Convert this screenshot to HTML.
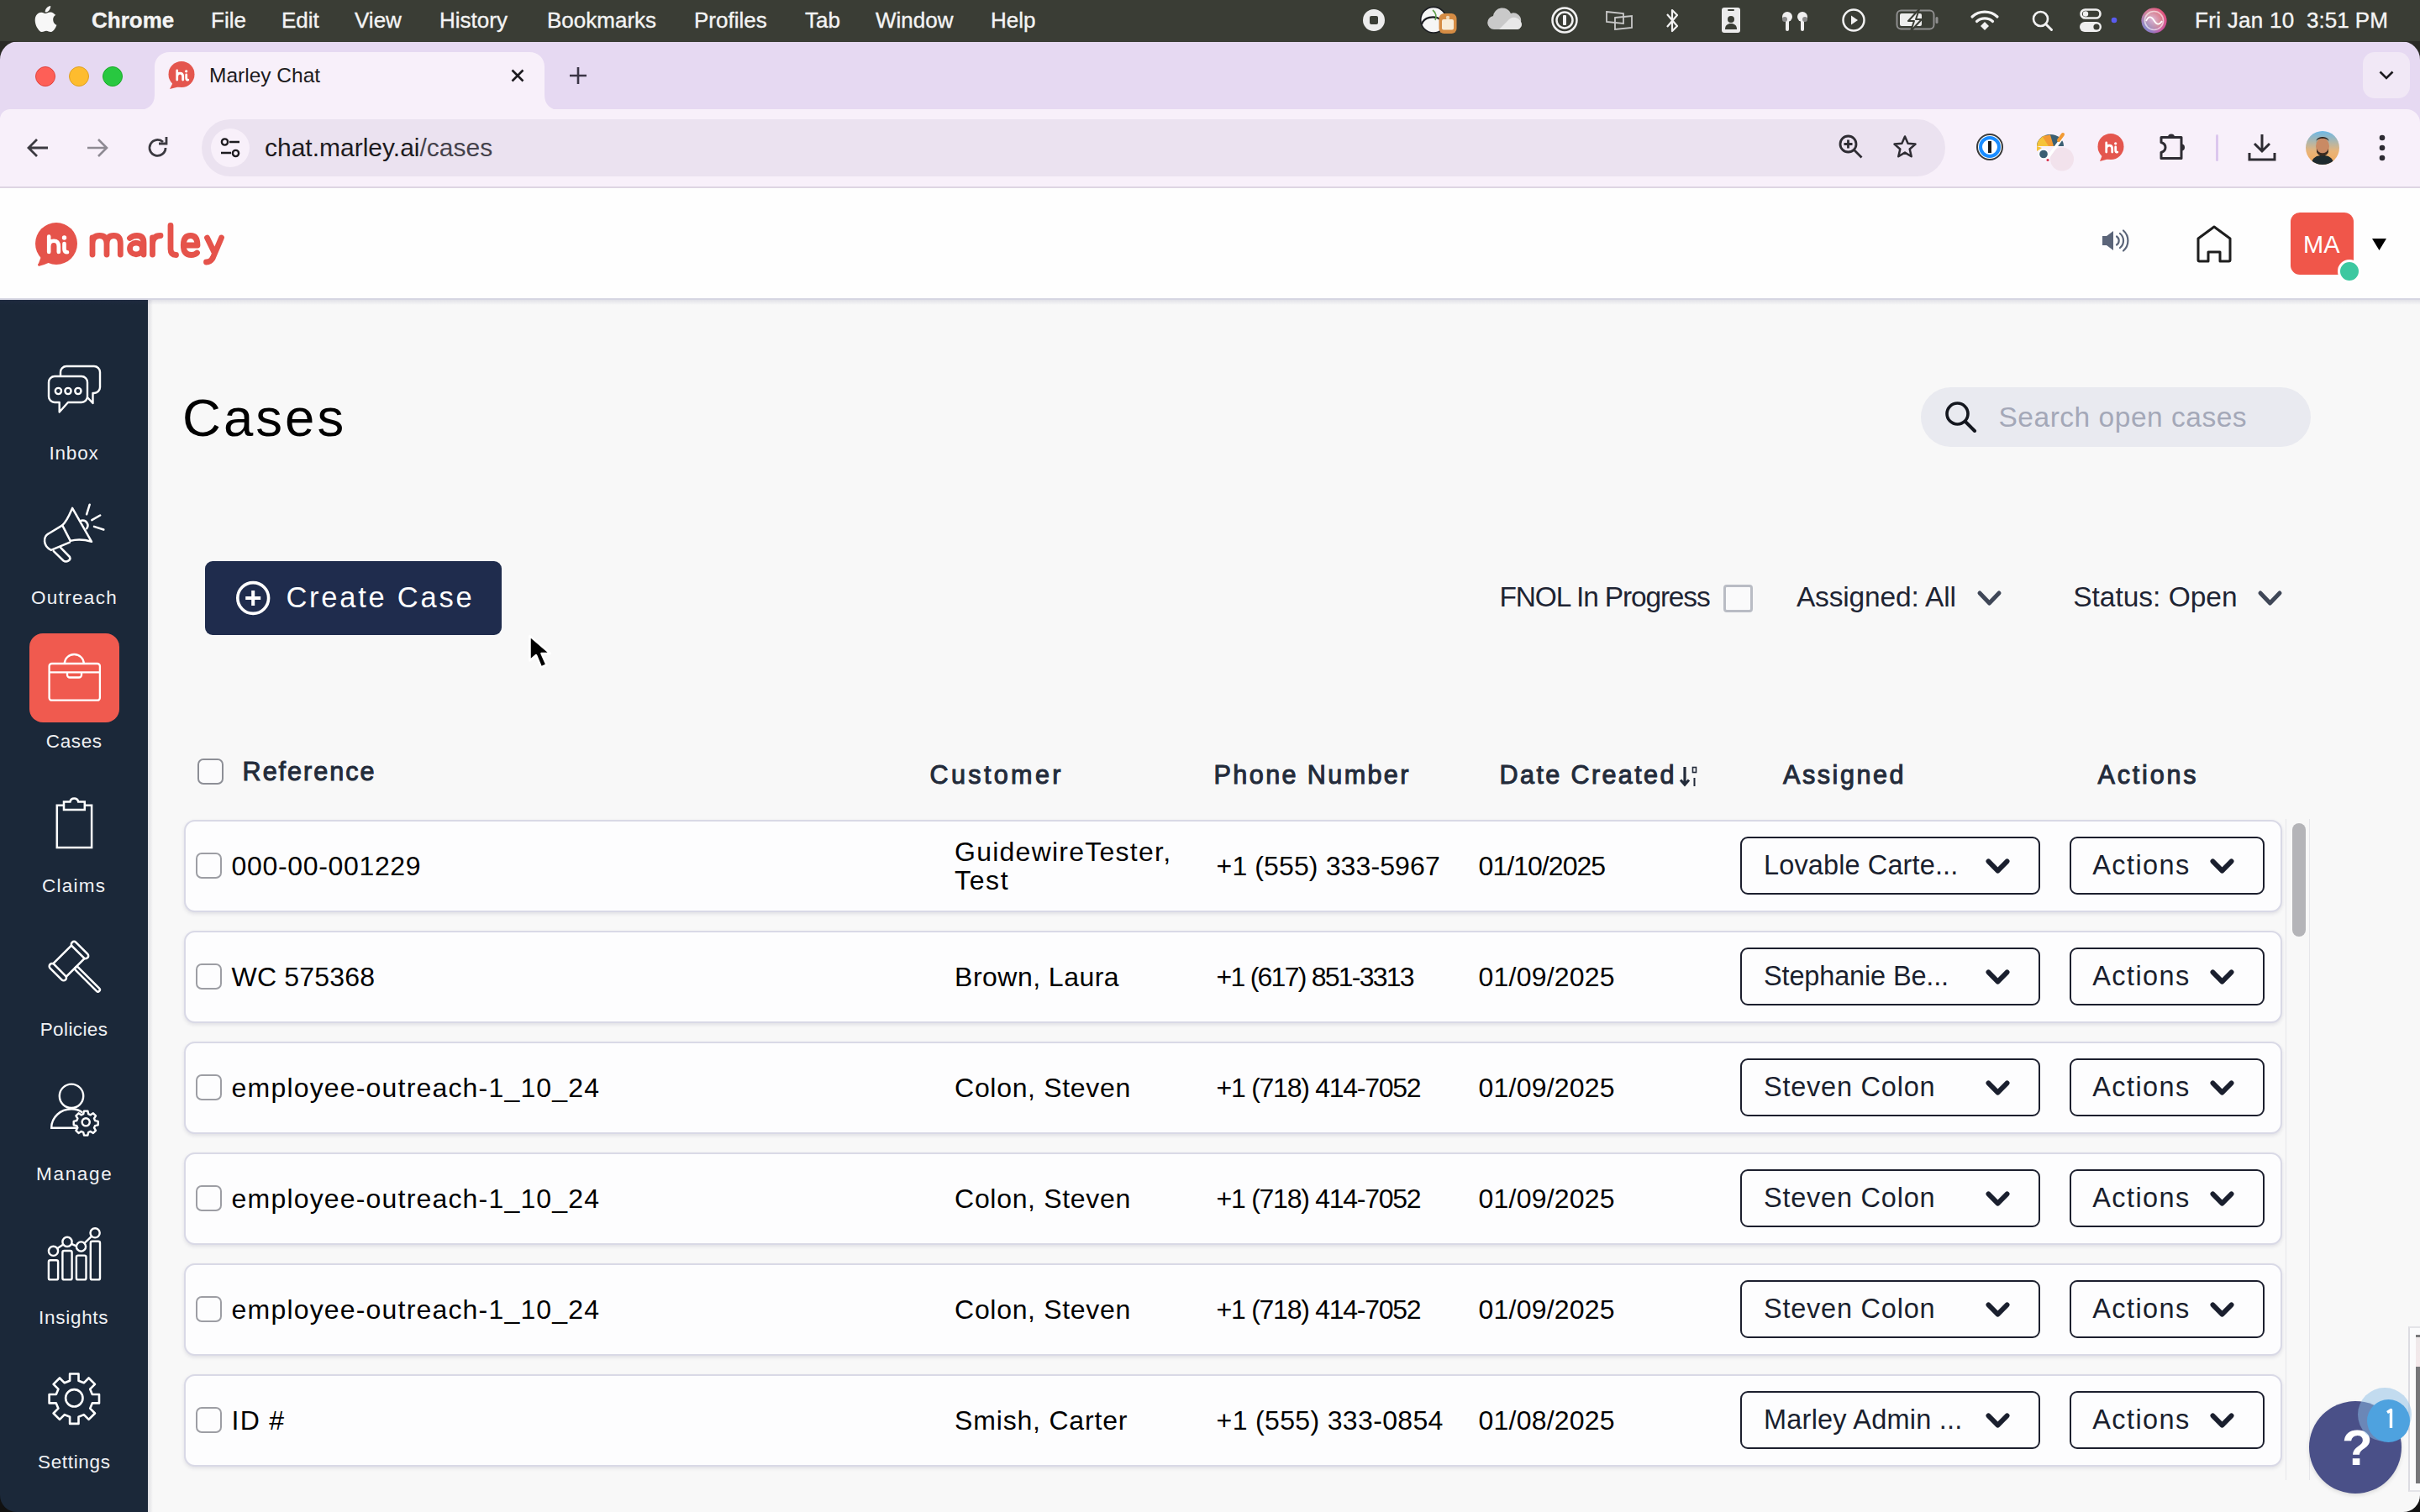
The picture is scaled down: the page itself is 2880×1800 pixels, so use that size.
<!DOCTYPE html>
<html><head><meta charset="utf-8">
<style>
*{box-sizing:border-box;margin:0;padding:0}
html,body{width:2880px;height:1800px;overflow:hidden;background:#f8f8f8;font-family:"Liberation Sans",sans-serif;position:relative}
.a{position:absolute}
svg{position:absolute;overflow:visible}
.t{position:absolute;white-space:nowrap;line-height:1}
#menubar{left:0;top:0;width:2880px;height:50px;background:#3a3d35;color:#f4f4f4;font-size:26px}
#menubar .t{top:11px;-webkit-text-stroke:0.35px #f4f4f4}
#tabstrip{left:0;top:50px;width:2880px;height:80px;background:#e6d9f2}
#toolbar{left:0;top:130px;width:2880px;height:94px;background:#f8f0fa;border-bottom:2px solid #ded5e3}
#omni{left:240px;top:142px;width:2075px;height:68px;background:#ebe2f0;border-radius:34px}
#apphdr{left:0;top:224px;width:2880px;height:133px;background:#fefefe;border-bottom:2px solid #d6d6e2}
#sidebar{left:0;top:357px;width:176px;height:1443px;background:#1b2839}
.nav2{width:176px;text-align:center;color:#f0f1f4;font-size:24.5px}
.card{left:219px;width:2497px;height:110px;border-radius:13px;background:#fdfdfe;border:2px solid #d9d9e6;box-shadow:0 2px 4px rgba(60,60,100,.13)}
.cb{width:31px;height:31px;border-radius:7px;border:2px solid #9d9ea4}
.dd{height:69px;border:2px solid #1c1f2e;border-radius:9px}
</style></head>
<body>
<!-- ===== macOS menu bar ===== -->
<div id="menubar" class="a">
  <svg style="left:42px;top:7px" width="26" height="31" viewBox="0 0 26 31"><path fill="#f7f7f7" d="M18.2 0c.2 2-.6 3.9-1.7 5.2-1.2 1.4-3 2.4-4.8 2.3-.2-1.9.7-3.9 1.8-5.1C14.7 1 16.6.1 18.2 0zM24.6 10.5c-.2.1-3.5 2-3.4 5.9 0 4.7 4.1 6.3 4.2 6.3 0 .1-.7 2.3-2.2 4.5-1.3 1.9-2.7 3.8-4.9 3.8-2.1 0-2.8-1.3-5.2-1.3-2.4 0-3.2 1.3-5.2 1.3-2.1.1-3.7-2.1-5-4C.3 23.2-1.7 16.2 1 11.5c1.3-2.3 3.7-3.8 6.3-3.8 2 0 3.9 1.4 5.1 1.4 1.2 0 3.3-1.7 5.6-1.5.9 0 3.7.4 5.5 3z"/></svg>
  <span class="t" style="left:109px;font-weight:bold">Chrome</span>
  <span class="t" style="left:251px">File</span>
  <span class="t" style="left:335px">Edit</span>
  <span class="t" style="left:422px">View</span>
  <span class="t" style="left:523px">History</span>
  <span class="t" style="left:651px">Bookmarks</span>
  <span class="t" style="left:826px">Profiles</span>
  <span class="t" style="left:958px">Tab</span>
  <span class="t" style="left:1042px">Window</span>
  <span class="t" style="left:1179px">Help</span>
  <!-- status icons -->
  <svg style="left:1622px;top:11px" width="26" height="26" viewBox="0 0 26 26"><circle cx="13" cy="13" r="13" fill="#ececec"/><rect x="8" y="8" width="10" height="10" rx="2" fill="#3a3d35"/></svg>
  <svg style="left:1690px;top:8px" width="46" height="34" viewBox="0 0 46 34"><circle cx="16" cy="15.7" r="15.3" fill="#f6f6f6" stroke="#1b1d22" stroke-width="1.6"/><path d="M2 21C4 13 16 9 26 16" fill="none" stroke="#1b1d22" stroke-width="2.2"/><path d="M15 4c4 3 5 8 3 12" fill="none" stroke="#5fa04a" stroke-width="1.6"/><rect x="22.5" y="8" width="21" height="24" rx="6" fill="#d58c44"/><rect x="26" y="15" width="14" height="12.5" rx="2" fill="#f8ecd8"/><circle cx="33" cy="13" r="2.2" fill="#f0d8b8"/></svg>
  <svg style="left:1770px;top:10px" width="42" height="26" viewBox="0 0 42 26"><path fill="#c9c9c9" d="M8 25a8 8 0 0 1-1-15.9A11 11 0 0 1 28 6a9 9 0 0 1 12 10 6 6 0 0 1-4 9z"/><path fill="#e8e8e8" d="M14 25l12-12a9 9 0 0 1 14 3 6 6 0 0 1-4 9z"/></svg>
  <svg style="left:1846px;top:8px" width="32" height="32" viewBox="0 0 32 32"><circle cx="16" cy="16" r="14.5" fill="none" stroke="#f2f2f2" stroke-width="2.5"/><circle cx="16" cy="16" r="9.5" fill="none" stroke="#f2f2f2" stroke-width="2.5"/><rect x="14" y="10" width="4" height="12" rx="1" fill="#f2f2f2"/></svg>
  <svg style="left:1911px;top:12px" width="32" height="24" viewBox="0 0 32 24"><path d="M1 2l20 2v12L1 14z" fill="none" stroke="#c8c8c8" stroke-width="1.8"/><path d="M11 9l20-2v14l-20 2z" fill="none" stroke="#c8c8c8" stroke-width="1.8"/></svg>
  <svg style="left:1981px;top:9px" width="18" height="31" viewBox="0 0 18 31"><path d="M3 8l12 14-6 6V3l6 6L3 23" fill="none" stroke="#f2f2f2" stroke-width="2.2" stroke-linejoin="round"/></svg>
  <svg style="left:2049px;top:9px" width="22" height="30" viewBox="0 0 22 30"><rect x="0" y="0" width="22" height="30" rx="3" fill="#ececec"/><rect x="7" y="2" width="8" height="2" rx="1" fill="#3a3d35"/><circle cx="11" cy="14" r="4" fill="#3a3d35"/><path d="M4 26c0-5 3-7 7-7s7 2 7 7z" fill="#3a3d35"/></svg>
  <svg style="left:2117px;top:10px" width="38" height="28" viewBox="0 0 38 28"><circle cx="10" cy="10" r="6" fill="#f0f0f0"/><rect x="8" y="10" width="4" height="17" rx="2" fill="#f0f0f0"/><circle cx="7" cy="13" r="3" fill="#8a8a8a"/><circle cx="28" cy="10" r="6" fill="#f0f0f0"/><rect x="26" y="10" width="4" height="17" rx="2" fill="#f0f0f0"/><circle cx="31" cy="13" r="3" fill="#8a8a8a"/></svg>
  <svg style="left:2192px;top:10px" width="28" height="28" viewBox="0 0 28 28"><circle cx="14" cy="14" r="12.5" fill="none" stroke="#f2f2f2" stroke-width="2.5"/><path d="M11 8.5l8 5.5-8 5.5z" fill="#f2f2f2"/></svg>
  <svg style="left:2256px;top:11px" width="52" height="26" viewBox="0 0 52 26"><rect x="1.5" y="1.5" width="44" height="22" rx="5" fill="none" stroke="#8f8f8f" stroke-width="2"/><rect x="5" y="5" width="26" height="15" rx="2" fill="#ededed"/><path d="M28 0L15 14h7l-4 12 13-14h-7z" fill="#ededed" stroke="#3a3d35" stroke-width="2" stroke-linejoin="round"/><rect x="47.5" y="9" width="3" height="8" rx="1.5" fill="#8f8f8f"/></svg>
  <svg style="left:2345px;top:12px" width="34" height="25" viewBox="0 0 34 25"><path d="M2 8a22 22 0 0 1 30 0" fill="none" stroke="#f2f2f2" stroke-width="3.2" stroke-linecap="round"/><path d="M7.5 13.5a14 14 0 0 1 19 0" fill="none" stroke="#f2f2f2" stroke-width="3.2" stroke-linecap="round"/><path d="M12 19l5-5 5 5-5 5z" fill="#f2f2f2"/></svg>
  <svg style="left:2418px;top:12px" width="26" height="26" viewBox="0 0 26 26"><circle cx="10.5" cy="10.5" r="8.5" fill="none" stroke="#f2f2f2" stroke-width="2.6"/><path d="M16.5 16.5l7 7" stroke="#f2f2f2" stroke-width="3" stroke-linecap="round"/></svg>
  <svg style="left:2475px;top:10px" width="46" height="28" viewBox="0 0 46 28"><rect x="1.5" y="1.5" width="23" height="10" rx="5" fill="none" stroke="#efefef" stroke-width="2.6"/><circle cx="7" cy="6.5" r="3.2" fill="#efefef"/><rect x="0" y="16" width="26" height="12" rx="6" fill="#efefef"/><circle cx="20" cy="22" r="3.6" fill="#3a3d35"/><circle cx="41" cy="14" r="3.3" fill="#5a5cf0"/></svg>
  <svg style="left:2548px;top:9px" width="31" height="31" viewBox="0 0 31 31"><defs><radialGradient id="sr" cx=".45" cy=".45" r=".6"><stop offset="0" stop-color="#f6d6c8"/><stop offset=".55" stop-color="#e9a07a"/><stop offset="1" stop-color="#e0307a"/></radialGradient><linearGradient id="sb" x1="0" y1="1" x2="1" y2="0"><stop offset="0" stop-color="#3aa8f0" stop-opacity=".9"/><stop offset=".5" stop-color="#a070f0" stop-opacity=".3"/><stop offset="1" stop-color="#ff3050" stop-opacity=".6"/></linearGradient></defs><circle cx="15.5" cy="15.5" r="15" fill="url(#sr)"/><circle cx="15.5" cy="15.5" r="15" fill="url(#sb)"/><circle cx="15.5" cy="15.5" r="11" fill="none" stroke="#fff" stroke-opacity=".6" stroke-width="1.6"/><path d="M6 16c3-6 6-6 9.5-.5s6.5 5.5 9.5.5" fill="none" stroke="#fff" stroke-width="1.8"/></svg>
  <span class="t" style="left:2612px;letter-spacing:0.3px">Fri Jan 10</span><span class="t" style="left:2745px">3:51 PM</span>
</div>

<!-- ===== Chrome tab strip ===== -->
<div id="tabstrip" class="a"></div>
<!-- window top corners -->
<svg style="left:0;top:49px" width="22" height="22" viewBox="0 0 22 22"><path d="M0 0h22A22 22 0 0 0 0 22z" fill="#2a2a26"/></svg>
<svg style="left:2858px;top:49px" width="22" height="22" viewBox="0 0 22 22"><path d="M22 0H0A22 22 0 0 1 22 22z" fill="#2a2a26"/></svg>
<!-- traffic lights -->
<div class="a" style="left:42px;top:79px;width:24px;height:24px;border-radius:50%;background:#fe5f57;border:1px solid #e0443e"></div>
<div class="a" style="left:82px;top:79px;width:24px;height:24px;border-radius:50%;background:#febc2e;border:1px solid #dea123"></div>
<div class="a" style="left:122px;top:79px;width:24px;height:24px;border-radius:50%;background:#28c840;border:1px solid #1aab29"></div>
<!-- active tab -->
<svg style="left:164px;top:61px" width="502" height="70" viewBox="0 0 502 70"><path d="M0 70c12 0 20-6 20-18V18C20 8 28 1 38 1h428c10 0 18 7 18 17v34c0 12 8 18 18 18z" fill="#f8f0fa"/></svg>
<svg style="left:200px;top:73px" width="32" height="34" viewBox="0 0 32 34"><circle cx="16" cy="15.5" r="15.5" fill="#e4564e"/><path d="M2 33l5-10 7 7z" fill="#e4564e"/><g transform="translate(16 16) scale(0.6) translate(-67 -290)"><g fill="none" stroke="#fff" stroke-width="4.6" stroke-linecap="round" stroke-linejoin="round"><path d="M58.2 281.5V300M58.2 293.5Q58.2 286.8 64 286.8Q69.8 286.8 69.8 293.5V300"/><path d="M76.5 290V296.5Q76.5 300.2 80 300.2"/></g><circle cx="76.5" cy="283" r="2.7" fill="#fff"/></g></svg>
<span class="t" style="left:249px;top:78px;font-size:24.5px;color:#1d1b20">Marley Chat</span>
<svg style="left:608px;top:82px" width="16" height="16" viewBox="0 0 16 16"><path d="M1.5 1.5l13 13M14.5 1.5l-13 13" stroke="#1d1b20" stroke-width="2.6"/></svg>
<svg style="left:677px;top:79px" width="22" height="22" viewBox="0 0 22 22"><path d="M11 1v20M1 11h20" stroke="#3b3546" stroke-width="2.6"/></svg>
<div class="a" style="left:2812px;top:62px;width:56px;height:55px;border-radius:14px;background:#f1e8f6"></div>
<svg style="left:2831px;top:84px" width="18" height="11" viewBox="0 0 18 11"><path d="M1.5 1.5l7.5 7.5 7.5-7.5" fill="none" stroke="#1d1b20" stroke-width="2.6"/></svg>

<!-- ===== Chrome toolbar ===== -->
<div id="toolbar" class="a"></div>
<svg style="left:0;top:130px" width="12" height="12" viewBox="0 0 12 12"><path d="M12 0H0v12A12 12 0 0 1 12 0z" fill="#e6d9f2"/></svg>
<svg style="left:2864px;top:130px" width="16" height="16" viewBox="0 0 16 16"><path d="M0 0h16v16A16 16 0 0 0 0 0z" fill="#e6d9f2"/></svg>
<svg style="left:32px;top:164px" width="26" height="24" viewBox="0 0 26 24"><path d="M12 2L2 12l10 10M2.5 12H25" fill="none" stroke="#3c3a41" stroke-width="2.8"/></svg>
<svg style="left:103px;top:164px" width="26" height="24" viewBox="0 0 26 24"><path d="M14 2l10 10-10 10M23.5 12H1" fill="none" stroke="#8e8a93" stroke-width="2.6"/></svg>
<svg style="left:175px;top:163px" width="26" height="26" viewBox="0 0 26 26"><path d="M22 13A9.5 9.5 0 1 1 19 6" fill="none" stroke="#3c3a41" stroke-width="2.8"/><path d="M14 8h9V0" fill="none" stroke="#3c3a41" stroke-width="2.8"/></svg>
<div id="omni" class="a"></div>
<div class="a" style="left:251px;top:153px;width:46px;height:46px;border-radius:50%;background:#f8f0fa"></div>
<svg style="left:262px;top:164px" width="24" height="24" viewBox="0 0 24 24"><circle cx="5.5" cy="5" r="3.6" fill="none" stroke="#1d1b20" stroke-width="2.4"/><path d="M11 5h12M1 18h12" stroke="#1d1b20" stroke-width="2.4"/><circle cx="18.5" cy="18.5" r="3.6" fill="none" stroke="#1d1b20" stroke-width="2.4"/></svg>
<span class="t" style="left:315px;top:161px;font-size:30px;color:#1d1b20">chat.marley.ai<span style="color:#45424b">/cases</span></span>
<svg style="left:2188px;top:160px" width="30" height="30" viewBox="0 0 30 30"><circle cx="11.5" cy="11.5" r="9.5" fill="none" stroke="#2e2c33" stroke-width="2.8"/><path d="M18.5 18.5l9 9M11.5 6.5v10M6.5 11.5h10" stroke="#2e2c33" stroke-width="2.8"/></svg>
<svg style="left:2252px;top:160px" width="30" height="30" viewBox="0 0 30 30"><path d="M15 2.5l3.6 8.3 8.9.8-6.8 5.9 2 8.8L15 21.6l-7.7 4.7 2-8.8-6.8-5.9 8.9-.8z" fill="none" stroke="#2e2c33" stroke-width="2.5" stroke-linejoin="round"/></svg>
<!-- extensions -->
<svg style="left:2352px;top:159px" width="32" height="32" viewBox="0 0 32 32"><circle cx="16" cy="16" r="15" fill="#fff" stroke="#3a3a3a" stroke-width="2"/><circle cx="16" cy="16" r="11" fill="none" stroke="#1a8cff" stroke-width="4"/><rect x="14" y="9" width="4" height="14" fill="#1a1a1a"/></svg>
<svg style="left:0;top:0" width="1" height="1" viewBox="0 0 1 1"><circle cx="2454" cy="189.5" r="14" fill="#f2e2ec"/><path d="M2424 174A16 14 0 0 1 2456 174z" fill="#3b5f73"/><path d="M2424 174A16 14 0 0 1 2434 161L2442 174z" fill="#f5c33a"/><path d="M2431 163A16 14 0 0 1 2440 160.5L2444 174H2438z" fill="#f29a34"/><path d="M2436 189L2454 164.5" stroke="#fff" stroke-width="3.5"/><path d="M2450 167L2455 160" stroke="#f29a34" stroke-width="4" stroke-linecap="round"/><path d="M2424 174V180L2430 176z" fill="#f5c33a"/><circle cx="2432" cy="183.5" r="5.6" fill="#3b5f73" stroke="#fff" stroke-width="1.5"/><circle cx="2437" cy="190.5" r="1.5" fill="#d6304a"/></svg>
<svg style="left:2496px;top:159px" width="32" height="34" viewBox="0 0 32 34"><circle cx="16" cy="15.5" r="15.5" fill="#e4564e"/><path d="M3 33l4-10 7 7z" fill="#e4564e"/><g transform="translate(16 16) scale(0.6) translate(-67 -290)"><g fill="none" stroke="#fff" stroke-width="4.6" stroke-linecap="round" stroke-linejoin="round"><path d="M58.2 281.5V300M58.2 293.5Q58.2 286.8 64 286.8Q69.8 286.8 69.8 293.5V300"/><path d="M76.5 290V296.5Q76.5 300.2 80 300.2"/></g><circle cx="76.5" cy="283" r="2.7" fill="#fff"/></g></svg>
<svg style="left:0;top:0" width="1" height="1" viewBox="0 0 1 1"><g fill="none" stroke="#2e2c33" stroke-width="3" stroke-linejoin="round"><path d="M2572 163.5H2596V188.5H2572V181.5Q2577 180 2577 175.6Q2577 171 2572 169.5z"/></g><path d="M2580 163.5A4 4 0 0 1 2588 163.5z" fill="#2e2c33"/><path d="M2596 171.5A4 4 0 0 1 2596 179.5z" fill="#2e2c33"/></svg>
<div class="a" style="left:2637px;top:160px;width:3px;height:32px;background:#dcc7ee;border-radius:2px"></div>
<svg style="left:2675px;top:158px" width="34" height="34" viewBox="0 0 34 34"><path d="M17 2v20M8 13l9 9 9-9M2 24v8h30v-8" fill="none" stroke="#2e2c33" stroke-width="3"/></svg>
<svg style="left:2744px;top:156px" width="40" height="40" viewBox="0 0 40 40"><defs><linearGradient id="av" x1="0" y1="0" x2="0" y2="1"><stop offset="0" stop-color="#6cb8e6"/><stop offset=".6" stop-color="#e9b478"/><stop offset="1" stop-color="#f2a75a"/></linearGradient><clipPath id="avc"><circle cx="20" cy="20" r="20"/></clipPath></defs><g clip-path="url(#avc)"><rect width="40" height="40" fill="url(#av)"/><path d="M6 40c2-9 7-11 14-11s12 2 14 11z" fill="#1e2a2e"/><ellipse cx="20" cy="18" rx="8" ry="10" fill="#c98a64"/><path d="M12 14c0-7 16-7 16 0l-1-4c-3-4-11-4-14 0z" fill="#2a1e18"/><path d="M13 21c2 7 12 7 14 0v4c-2 6-12 6-14 0z" fill="#3a2a20"/></g></svg>
<svg style="left:2829px;top:160px" width="12" height="32" viewBox="0 0 12 32"><circle cx="6" cy="4" r="3.3" fill="#2e2c33"/><circle cx="6" cy="16" r="3.3" fill="#2e2c33"/><circle cx="6" cy="28" r="3.3" fill="#2e2c33"/></svg>


<!-- ===== App header ===== -->
<div id="apphdr" class="a"></div>
<svg style="left:41px;top:264px" width="54" height="54" viewBox="0 0 54 54"><circle cx="26" cy="26" r="25" fill="#e5534b"/><path d="M4 52L10 36 24 46z" fill="#e5534b"/><path d="M4.5 51.5c5-1 9-2.5 12-4" fill="none" stroke="#e5534b" stroke-width="3"/></svg><svg style="left:0;top:0" width="1" height="1" viewBox="0 0 1 1"><g fill="none" stroke="#fff" stroke-width="4.6" stroke-linecap="round" stroke-linejoin="round"><path d="M58.2 281.5V300M58.2 293.5Q58.2 286.8 64 286.8Q69.8 286.8 69.8 293.5V300"/><path d="M76.5 290V296.5Q76.5 300.2 80 300.2"/></g><circle cx="76.5" cy="283" r="2.7" fill="#fff"/></svg>
<svg style="left:0;top:0" width="1" height="1" viewBox="0 0 1 1"><g fill="none" stroke="#e5534b" stroke-width="6.8" stroke-linecap="round" stroke-linejoin="round"><path d="M110 303V283M110 290Q110 280.5 118.5 280.5Q127 280.5 127 290V303M127 290Q127 280.5 135.5 280.5Q143.3 280.5 143.3 290V303"/><path d="M154.5 283.5Q158 280.5 163 280.5Q171 280.5 171 289V303"/><ellipse cx="162" cy="296" rx="7.5" ry="6.8"/><path d="M181.5 303V283M181.5 291Q181.5 280.5 191 280.5"/><path d="M203 268.5V296.5Q203 303.5 209.5 303.5"/><path d="M218.6 292H235Q235 280.5 226.8 280.5Q218.3 280.5 218.3 292Q218.3 303.5 227.5 303.5Q232 303.5 234.5 301"/><path d="M246.5 283L255.5 301.5M263.5 283L253.5 306.5Q251 312 245.5 312"/></g></svg>
<svg style="left:2502px;top:273px" width="30" height="27" viewBox="0 0 30 27"><path d="M0 8h5l8-6v23l-8-6H0z" fill="#5b6579"/><path d="M17 8.5a6 6 0 0 1 0 10M21 5a11 11 0 0 1 0 17M25 1.5a16 16 0 0 1 0 24" fill="none" stroke="#5b6579" stroke-width="2.2" stroke-linecap="round"/></svg>
<svg style="left:2613px;top:267px" width="44" height="46" viewBox="0 0 44 46"><path d="M3 17L22 3l19 14v25.5a1.5 1.5 0 0 1-1.5 1.5H29V33h-14v11H4.5A1.5 1.5 0 0 1 3 42.5z" fill="none" stroke="#1e1e1e" stroke-width="3" stroke-linejoin="round"/></svg>
<div class="a" style="left:2726px;top:253px;width:75px;height:74px;border-radius:11px;background:#f0564a"></div>
<span class="t" style="left:2741px;top:277px;font-size:29px;color:#fff">MA</span>
<div class="a" style="left:2782px;top:309px;width:28px;height:28px;border-radius:50%;background:#3cc8a0;border:3px solid #fff"></div>
<svg style="left:2823px;top:284px" width="17" height="14" viewBox="0 0 17 14"><path d="M0 0h17L8.5 14z" fill="#000"/></svg>

<!-- ===== Sidebar ===== -->
<div id="sidebar" class="a"></div>
<div class="a" style="left:176px;top:357px;width:6px;height:1443px;background:linear-gradient(90deg,rgba(40,40,70,.12),rgba(40,40,70,0))"></div>
<div class="a" style="left:0;top:357px;width:2880px;height:6px;background:linear-gradient(rgba(60,60,110,.12),rgba(60,60,110,0))"></div>
<svg style="left:40px;top:420px" width="100" height="80" viewBox="0 0 100 80" fill="none" stroke="#fff" stroke-width="2.4" stroke-linejoin="round"><path d="M32 28V23a7 7 0 0 1 7-7H72a7 7 0 0 1 7 7V41a7 7 0 0 1-7 7H70.5V60L64 53"/><path d="M25 28H57a7 7 0 0 1 7 7V52a7 7 0 0 1-7 7H41L30.7 70.5V59H25a7 7 0 0 1-7-7V35a7 7 0 0 1 7-7z"/><circle cx="29.4" cy="45.5" r="3.6"/><circle cx="41" cy="45.5" r="3.6"/><circle cx="52.9" cy="45.5" r="3.6"/></svg>
<span class="t" style="left:58.5px;top:529.0px;font-size:22.5px;color:#f0f1f4;letter-spacing:0.79px">Inbox</span>
<svg style="left:40px;top:590px" width="100" height="90" viewBox="0 0 100 90" fill="none" stroke="#fff" stroke-width="2.5" stroke-linejoin="round" stroke-linecap="round"><path d="M34.2 35.4C40 30 43 22 46.1 14.9L69 54.8C60 52 50 52 43.75 53.9z"/><path d="M34.2 35.4L17.9 45.2C11 49 11 60 20.8 64.9L43 55.7"/><path d="M23.8 66.1L35.5 77.5C39 80 45 77 43 73L32.1 61.9"/><path d="M56.8 29.8A6 6 0 0 1 63.1 39.3"/><path d="M66.7 10.7L63.1 22.3M79.2 23.5L69.3 29.2M72 36.9L83.3 40.5"/></svg>
<span class="t" style="left:36.9px;top:700.5px;font-size:22.5px;color:#f0f1f4;letter-spacing:1.34px">Outreach</span>
<div class="a" style="left:35px;top:754px;width:107px;height:106px;border-radius:16px;background:#f05a4f"></div>
<svg style="left:30px;top:750px" width="120" height="120" viewBox="0 0 120 120" fill="none" stroke="#fff" stroke-width="2.3" stroke-linejoin="round"><rect x="28.6" y="40" width="60.3" height="43.7" rx="3"/><path d="M28.6 50.4H88.9"/><path d="M46.8 40A11.5 11 0 0 1 69.8 40"/><path d="M50 50.4V53.5a3 3 0 0 0 3 3H64a3 3 0 0 0 3-3V50.4"/></svg>
<span class="t" style="left:54.8px;top:872.0px;font-size:22.5px;color:#f0f1f4;letter-spacing:0.61px">Cases</span>
<svg style="left:40px;top:930px" width="100" height="100" viewBox="0 0 100 100" fill="none" stroke="#fff" stroke-width="2.5"><path d="M36 28.8H27.8V79H69.1V28.8H60.8"/><path d="M36 34H60.8V24.5H53.2A5 5 0 0 0 43.4 24.5H36z"/></svg>
<span class="t" style="left:50.0px;top:1043.5px;font-size:22.5px;color:#f0f1f4;letter-spacing:1.25px">Claims</span>
<svg style="left:40px;top:1100px" width="100" height="100" viewBox="0 0 100 100" fill="none" stroke="#fff" stroke-width="2.5"><g transform="translate(42.1 43.9) rotate(45)"><rect x="-13" y="-21.5" width="26" height="6.5" rx="3.2"/><rect x="-13" y="15.5" width="26" height="6.5" rx="3.2"/><path d="M-11-15V15.5M11-15V15.5"/><rect x="11" y="-2.3" width="40" height="4.6" rx="2.3"/></g></svg>
<span class="t" style="left:47.7px;top:1215.0px;font-size:22.5px;color:#f0f1f4;letter-spacing:0.40px">Policies</span>
<svg style="left:40px;top:1275px" width="100" height="100" viewBox="0 0 100 100" fill="none" stroke="#fff" stroke-width="2.4"><circle cx="45" cy="29.8" r="14.2"/><path d="M52 67.8H21.2C21.2 55 32 45.3 45 45.3C50 45.3 55 47 58 49.5"/><g transform="translate(62.2 60.8)"><path id="gearM" d="M-2.2-13.2h4.4l.8 3.6 2.6 1.1 3.1-2 3.1 3.1-2 3.1 1.1 2.6 3.6.8v4.4l-3.6.8-1.1 2.6 2 3.1-3.1 3.1-3.1-2-2.6 1.1-.8 3.6h-4.4l-.8-3.6-2.6-1.1-3.1 2-3.1-3.1 2-3.1-1.1-2.6-3.6-.8v-4.4l3.6-.8 1.1-2.6-2-3.1 3.1-3.1 3.1 2 2.6-1.1z" stroke-linejoin="round"/><circle r="4.6"/></g></svg>
<span class="t" style="left:43.0px;top:1386.5px;font-size:22.5px;color:#f0f1f4;letter-spacing:1.70px">Manage</span>
<svg style="left:40px;top:1445px" width="100" height="100" viewBox="0 0 100 100" fill="none" stroke="#fff" stroke-width="2.4"><rect x="17.9" y="55.2" width="11.2" height="23.2" rx="2"/><rect x="34.4" y="44" width="11.2" height="34.4" rx="2"/><rect x="50.9" y="49.6" width="11.6" height="28.8" rx="2"/><rect x="67.8" y="32.7" width="11.2" height="45.7" rx="2"/><circle cx="23.5" cy="44.3" r="5.6"/><circle cx="40" cy="33.4" r="5.6"/><circle cx="56.5" cy="39" r="5.6"/><circle cx="73.1" cy="22.8" r="5.6"/><path d="M28.2 41.2L35.3 36.5M45.2 35.8L51.3 38.6M60.5 35L69.1 26.7"/></svg>
<span class="t" style="left:46.0px;top:1558.0px;font-size:22.5px;color:#f0f1f4;letter-spacing:0.72px">Insights</span>
<svg style="left:40px;top:1615px" width="100" height="100" viewBox="0 0 100 100" fill="none" stroke="#fff" stroke-width="2.6" stroke-linejoin="round"><g transform="translate(48.3 49.3)"><path d="M-5.2-28.8h10.4v8.2l6.3 2.6 5.8-5.8 7.4 7.4-5.8 5.8 2.6 6.3h8.2v10.4h-8.2l-2.6 6.3 5.8 5.8-7.4 7.4-5.8-5.8-6.3 2.6v8.2h-10.4v-8.2l-6.3-2.6-5.8 5.8-7.4-7.4 5.8-5.8-2.6-6.3h-8.2v-10.4h8.2l2.6-6.3-5.8-5.8 7.4-7.4 5.8 5.8 6.3-2.6z"/><circle r="10.2"/></g></svg>
<span class="t" style="left:45.0px;top:1729.5px;font-size:22.5px;color:#f0f1f4;letter-spacing:0.66px">Settings</span>
<!-- ===== Main ===== -->
<span class="t" style="left:217.1px;top:465.9px;font-size:63.5px;color:#000;letter-spacing:3.02px">Cases</span>
<div class="a" style="left:2286px;top:461px;width:464px;height:71px;border-radius:36px;background:#e9eaf0"></div>
<svg style="left:2314px;top:477px" width="40" height="40" viewBox="0 0 40 40"><circle cx="15.5" cy="15.5" r="12.5" fill="none" stroke="#14171f" stroke-width="3.6"/><path d="M25 25l11 11" stroke="#14171f" stroke-width="4" stroke-linecap="round"/></svg>
<span class="t" style="left:2378.5px;top:479.6px;font-size:33.5px;color:#a4a8b8;letter-spacing:0.52px">Search open cases</span>
<div class="a" style="left:244px;top:668px;width:353px;height:88px;border-radius:9px;background:#1f2c4d"></div>
<svg style="left:280px;top:691px" width="43" height="43" viewBox="0 0 43 43"><circle cx="21.2" cy="21" r="18.4" fill="none" stroke="#fff" stroke-width="3.6"/><path d="M21.2 12v18M12.2 21h18" stroke="#fff" stroke-width="4"/></svg>
<span class="t" style="left:340.4px;top:694.3px;font-size:34.5px;color:#fff;letter-spacing:2.76px">Create Case</span>
<span class="t" style="left:1784.5px;top:694.2px;font-size:33.5px;color:#1e2433;letter-spacing:-1.17px">FNOL In Progress</span>
<div class="a" style="left:2051px;top:696px;width:35px;height:33px;border-radius:4px;border:3px solid #b9bcc4;background:#fafafb"></div>
<span class="t" style="left:2137.9px;top:694.2px;font-size:33.5px;color:#1e2433;letter-spacing:-0.14px">Assigned: All</span>
<svg style="left:2353px;top:703px" width="29" height="18" viewBox="0 0 29 18"><path d="M3.0 3.0L14.5 15.0L26.0 3.0" fill="none" stroke="#3f4757" stroke-width="5" stroke-linecap="round" stroke-linejoin="round"/></svg>
<span class="t" style="left:2467.2px;top:694.2px;font-size:33.5px;color:#1e2433;letter-spacing:-0.01px">Status: Open</span>
<svg style="left:2687px;top:703px" width="29" height="18" viewBox="0 0 29 18"><path d="M3.0 3.0L14.5 15.0L26.0 3.0" fill="none" stroke="#3f4757" stroke-width="5" stroke-linecap="round" stroke-linejoin="round"/></svg>
<div class="a" style="left:235px;top:903px;width:31px;height:31px;border-radius:7px;border:2px solid #8d8f96;background:#fbfbfc"></div>
<span class="t" style="left:288.6px;top:902.8px;font-size:30.6px;color:#232b3a;letter-spacing:1.96px;-webkit-text-stroke:1px #232b3a">Reference</span>
<span class="t" style="left:1106.6px;top:906.6px;font-size:30.6px;color:#232b3a;letter-spacing:3.32px;-webkit-text-stroke:1px #232b3a">Customer</span>
<span class="t" style="left:1444.6px;top:906.6px;font-size:30.6px;color:#232b3a;letter-spacing:2.37px;-webkit-text-stroke:1px #232b3a">Phone Number</span>
<span class="t" style="left:1784.6px;top:906.5px;font-size:30.6px;color:#232b3a;letter-spacing:2.35px;-webkit-text-stroke:1px #232b3a">Date Created</span>
<svg style="left:1998px;top:911px" width="24" height="26" viewBox="0 0 24 26"><path d="M7 2v21M2 17.5l5 5.5 5-5.5" fill="none" stroke="#232b3a" stroke-width="3.2"/><rect x="16.5" y="2.5" width="4" height="6" fill="none" stroke="#232b3a" stroke-width="1.6"/><path d="M18.5 15v10" stroke="#232b3a" stroke-width="2"/></svg>
<span class="t" style="left:2122.1px;top:906.6px;font-size:30.6px;color:#232b3a;letter-spacing:2.50px;-webkit-text-stroke:1px #232b3a">Assigned</span>
<span class="t" style="left:2496.6px;top:906.6px;font-size:30.6px;color:#232b3a;letter-spacing:2.76px;-webkit-text-stroke:1px #232b3a">Actions</span>
<div class="a card" style="top:976px"></div>
<div class="a cb" style="left:233px;top:1015px"></div>
<span class="t" style="left:275.6px;top:1014.7px;font-size:32px;color:#000;letter-spacing:0.66px">000-00-001229</span>
<span class="t" style="left:1136.0px;top:997.6px;font-size:32px;color:#000;letter-spacing:1.25px">GuidewireTester,</span>
<span class="t" style="left:1136.0px;top:1031.9px;font-size:32px;color:#000;letter-spacing:1.65px">Test</span>
<span class="t" style="left:1447.6px;top:1014.7px;font-size:32px;color:#000;letter-spacing:0.12px">+1 (555) 333-5967</span>
<span class="t" style="left:1759.6px;top:1014.7px;font-size:32px;color:#000;letter-spacing:-0.96px">01/10/2025</span>
<div class="a dd" style="left:2071px;top:996px;width:357px"></div>
<span class="t" style="left:2099.0px;top:1013.7px;font-size:32.5px;color:#1a1f2e;letter-spacing:0.12px">Lovable Carte...</span>
<svg style="left:2363px;top:1022px" width="29" height="18" viewBox="0 0 29 18"><path d="M3.4 3.4L14.5 14.6L25.6 3.4" fill="none" stroke="#1a1f2e" stroke-width="5.8" stroke-linecap="round" stroke-linejoin="round"/></svg>
<div class="a dd" style="left:2463px;top:996px;width:232px"></div>
<span class="t" style="left:2490.2px;top:1013.7px;font-size:32.5px;color:#1a1f2e;letter-spacing:1.42px">Actions</span>
<svg style="left:2630px;top:1022px" width="29" height="18" viewBox="0 0 29 18"><path d="M3.4 3.4L14.5 14.6L25.6 3.4" fill="none" stroke="#1a1f2e" stroke-width="5.8" stroke-linecap="round" stroke-linejoin="round"/></svg>
<div class="a card" style="top:1108px"></div>
<div class="a cb" style="left:233px;top:1147px"></div>
<span class="t" style="left:275.6px;top:1146.7px;font-size:32px;color:#000;letter-spacing:0.18px">WC 575368</span>
<span class="t" style="left:1136.1px;top:1146.7px;font-size:32px;color:#000;letter-spacing:0.47px">Brown, Laura</span>
<span class="t" style="left:1447.6px;top:1146.7px;font-size:32px;color:#000;letter-spacing:-1.76px">+1 (617) 851-3313</span>
<span class="t" style="left:1759.6px;top:1146.7px;font-size:32px;color:#000;letter-spacing:0.21px">01/09/2025</span>
<div class="a dd" style="left:2071px;top:1128px;width:357px"></div>
<span class="t" style="left:2099.0px;top:1145.7px;font-size:32.5px;color:#1a1f2e;letter-spacing:-0.15px">Stephanie Be...</span>
<svg style="left:2363px;top:1154px" width="29" height="18" viewBox="0 0 29 18"><path d="M3.4 3.4L14.5 14.6L25.6 3.4" fill="none" stroke="#1a1f2e" stroke-width="5.8" stroke-linecap="round" stroke-linejoin="round"/></svg>
<div class="a dd" style="left:2463px;top:1128px;width:232px"></div>
<span class="t" style="left:2490.2px;top:1145.7px;font-size:32.5px;color:#1a1f2e;letter-spacing:1.42px">Actions</span>
<svg style="left:2630px;top:1154px" width="29" height="18" viewBox="0 0 29 18"><path d="M3.4 3.4L14.5 14.6L25.6 3.4" fill="none" stroke="#1a1f2e" stroke-width="5.8" stroke-linecap="round" stroke-linejoin="round"/></svg>
<div class="a card" style="top:1240px"></div>
<div class="a cb" style="left:233px;top:1279px"></div>
<span class="t" style="left:275.6px;top:1278.7px;font-size:32px;color:#000;letter-spacing:1.18px">employee-outreach-1_10_24</span>
<span class="t" style="left:1136.1px;top:1278.7px;font-size:32px;color:#000;letter-spacing:0.68px">Colon, Steven</span>
<span class="t" style="left:1447.6px;top:1278.7px;font-size:32px;color:#000;letter-spacing:-1.26px">+1 (718) 414-7052</span>
<span class="t" style="left:1759.6px;top:1278.7px;font-size:32px;color:#000;letter-spacing:0.21px">01/09/2025</span>
<div class="a dd" style="left:2071px;top:1260px;width:357px"></div>
<span class="t" style="left:2099.0px;top:1277.7px;font-size:32.5px;color:#1a1f2e;letter-spacing:0.77px">Steven Colon</span>
<svg style="left:2363px;top:1286px" width="29" height="18" viewBox="0 0 29 18"><path d="M3.4 3.4L14.5 14.6L25.6 3.4" fill="none" stroke="#1a1f2e" stroke-width="5.8" stroke-linecap="round" stroke-linejoin="round"/></svg>
<div class="a dd" style="left:2463px;top:1260px;width:232px"></div>
<span class="t" style="left:2490.2px;top:1277.7px;font-size:32.5px;color:#1a1f2e;letter-spacing:1.42px">Actions</span>
<svg style="left:2630px;top:1286px" width="29" height="18" viewBox="0 0 29 18"><path d="M3.4 3.4L14.5 14.6L25.6 3.4" fill="none" stroke="#1a1f2e" stroke-width="5.8" stroke-linecap="round" stroke-linejoin="round"/></svg>
<div class="a card" style="top:1372px"></div>
<div class="a cb" style="left:233px;top:1411px"></div>
<span class="t" style="left:275.6px;top:1410.7px;font-size:32px;color:#000;letter-spacing:1.18px">employee-outreach-1_10_24</span>
<span class="t" style="left:1136.1px;top:1410.7px;font-size:32px;color:#000;letter-spacing:0.68px">Colon, Steven</span>
<span class="t" style="left:1447.6px;top:1410.7px;font-size:32px;color:#000;letter-spacing:-1.26px">+1 (718) 414-7052</span>
<span class="t" style="left:1759.6px;top:1410.7px;font-size:32px;color:#000;letter-spacing:0.21px">01/09/2025</span>
<div class="a dd" style="left:2071px;top:1392px;width:357px"></div>
<span class="t" style="left:2099.0px;top:1409.7px;font-size:32.5px;color:#1a1f2e;letter-spacing:0.77px">Steven Colon</span>
<svg style="left:2363px;top:1418px" width="29" height="18" viewBox="0 0 29 18"><path d="M3.4 3.4L14.5 14.6L25.6 3.4" fill="none" stroke="#1a1f2e" stroke-width="5.8" stroke-linecap="round" stroke-linejoin="round"/></svg>
<div class="a dd" style="left:2463px;top:1392px;width:232px"></div>
<span class="t" style="left:2490.2px;top:1409.7px;font-size:32.5px;color:#1a1f2e;letter-spacing:1.42px">Actions</span>
<svg style="left:2630px;top:1418px" width="29" height="18" viewBox="0 0 29 18"><path d="M3.4 3.4L14.5 14.6L25.6 3.4" fill="none" stroke="#1a1f2e" stroke-width="5.8" stroke-linecap="round" stroke-linejoin="round"/></svg>
<div class="a card" style="top:1504px"></div>
<div class="a cb" style="left:233px;top:1543px"></div>
<span class="t" style="left:275.6px;top:1542.7px;font-size:32px;color:#000;letter-spacing:1.18px">employee-outreach-1_10_24</span>
<span class="t" style="left:1136.1px;top:1542.7px;font-size:32px;color:#000;letter-spacing:0.68px">Colon, Steven</span>
<span class="t" style="left:1447.6px;top:1542.7px;font-size:32px;color:#000;letter-spacing:-1.26px">+1 (718) 414-7052</span>
<span class="t" style="left:1759.6px;top:1542.7px;font-size:32px;color:#000;letter-spacing:0.21px">01/09/2025</span>
<div class="a dd" style="left:2071px;top:1524px;width:357px"></div>
<span class="t" style="left:2099.0px;top:1541.7px;font-size:32.5px;color:#1a1f2e;letter-spacing:0.77px">Steven Colon</span>
<svg style="left:2363px;top:1550px" width="29" height="18" viewBox="0 0 29 18"><path d="M3.4 3.4L14.5 14.6L25.6 3.4" fill="none" stroke="#1a1f2e" stroke-width="5.8" stroke-linecap="round" stroke-linejoin="round"/></svg>
<div class="a dd" style="left:2463px;top:1524px;width:232px"></div>
<span class="t" style="left:2490.2px;top:1541.7px;font-size:32.5px;color:#1a1f2e;letter-spacing:1.42px">Actions</span>
<svg style="left:2630px;top:1550px" width="29" height="18" viewBox="0 0 29 18"><path d="M3.4 3.4L14.5 14.6L25.6 3.4" fill="none" stroke="#1a1f2e" stroke-width="5.8" stroke-linecap="round" stroke-linejoin="round"/></svg>
<div class="a card" style="top:1636px"></div>
<div class="a cb" style="left:233px;top:1675px"></div>
<span class="t" style="left:275.6px;top:1674.7px;font-size:32px;color:#000;letter-spacing:1.25px">ID #</span>
<span class="t" style="left:1136.1px;top:1674.7px;font-size:32px;color:#000;letter-spacing:0.81px">Smish, Carter</span>
<span class="t" style="left:1447.6px;top:1674.7px;font-size:32px;color:#000;letter-spacing:0.35px">+1 (555) 333-0854</span>
<span class="t" style="left:1759.6px;top:1674.7px;font-size:32px;color:#000;letter-spacing:0.21px">01/08/2025</span>
<div class="a dd" style="left:2071px;top:1656px;width:357px"></div>
<span class="t" style="left:2099.0px;top:1673.7px;font-size:32.5px;color:#1a1f2e;letter-spacing:0.22px">Marley Admin ...</span>
<svg style="left:2363px;top:1682px" width="29" height="18" viewBox="0 0 29 18"><path d="M3.4 3.4L14.5 14.6L25.6 3.4" fill="none" stroke="#1a1f2e" stroke-width="5.8" stroke-linecap="round" stroke-linejoin="round"/></svg>
<div class="a dd" style="left:2463px;top:1656px;width:232px"></div>
<span class="t" style="left:2490.2px;top:1673.7px;font-size:32.5px;color:#1a1f2e;letter-spacing:1.42px">Actions</span>
<svg style="left:2630px;top:1682px" width="29" height="18" viewBox="0 0 29 18"><path d="M3.4 3.4L14.5 14.6L25.6 3.4" fill="none" stroke="#1a1f2e" stroke-width="5.8" stroke-linecap="round" stroke-linejoin="round"/></svg>
<div class="a" style="left:2720px;top:975px;width:1px;height:787px;background:#e6e6ea"></div>
<div class="a" style="left:2748px;top:975px;width:1px;height:787px;background:#e6e6ea"></div>
<div class="a" style="left:2728px;top:980px;width:16px;height:135px;border-radius:8px;background:#b4b4b8"></div>
<div class="a" style="left:2866px;top:1579px;width:14px;height:197px;background:#fbfbfc;border-left:2px solid #dcdce2;border-top:2px solid #e4e4e8;border-bottom:2px solid #e4e4e8"></div>
<div class="a" style="left:2875px;top:1589px;width:5px;height:177px;background:#767679"></div>
<div class="a" style="left:2875px;top:1589px;width:5px;height:38px;background:linear-gradient(#7a7a7c 0,#7a7a7c 3px,#efe9ea 3px,#f4e8ea 100%)"></div>
<div class="a" style="left:2748px;top:1668px;width:110px;height:110px;border-radius:50%;background:#4a5088;box-shadow:0 2px 5px rgba(0,0,0,.12)"></div>
<span class="t" style="left:2787px;top:1694px;font-size:60px;font-weight:bold;color:#fff">?</span>
<div class="a" style="left:2806px;top:1652px;width:64px;height:64px;border-radius:50%;background:rgba(140,190,230,.5)"></div>
<div class="a" style="left:2817px;top:1666px;width:51px;height:51px;border-radius:50%;background:#4ea2df"></div>
<svg style="left:2838px;top:1677px" width="14" height="24" viewBox="0 0 14 24"><path d="M3 4.5L7.5 1.5V23" fill="none" stroke="#fff" stroke-width="3.4" stroke-linejoin="round"/></svg>
<svg style="left:628px;top:752px" width="32" height="46" viewBox="0 0 32 46"><path d="M2.5 5v29.5l7.5-6.5 6 14.5 6.5-3-6-13.5h10.5z" fill="#000" stroke="#fff" stroke-width="2.5" stroke-linejoin="round"/></svg>
<!-- ===== /Main ===== -->
<!-- window bottom corners -->
<svg style="left:0;top:1780px" width="20" height="20" viewBox="0 0 20 20"><path d="M0 0A20 20 0 0 0 20 20H0z" fill="#111"/></svg>
<svg style="left:2860px;top:1780px" width="20" height="20" viewBox="0 0 20 20"><path d="M20 0A20 20 0 0 1 0 20H20z" fill="#111"/></svg>
</body></html>
